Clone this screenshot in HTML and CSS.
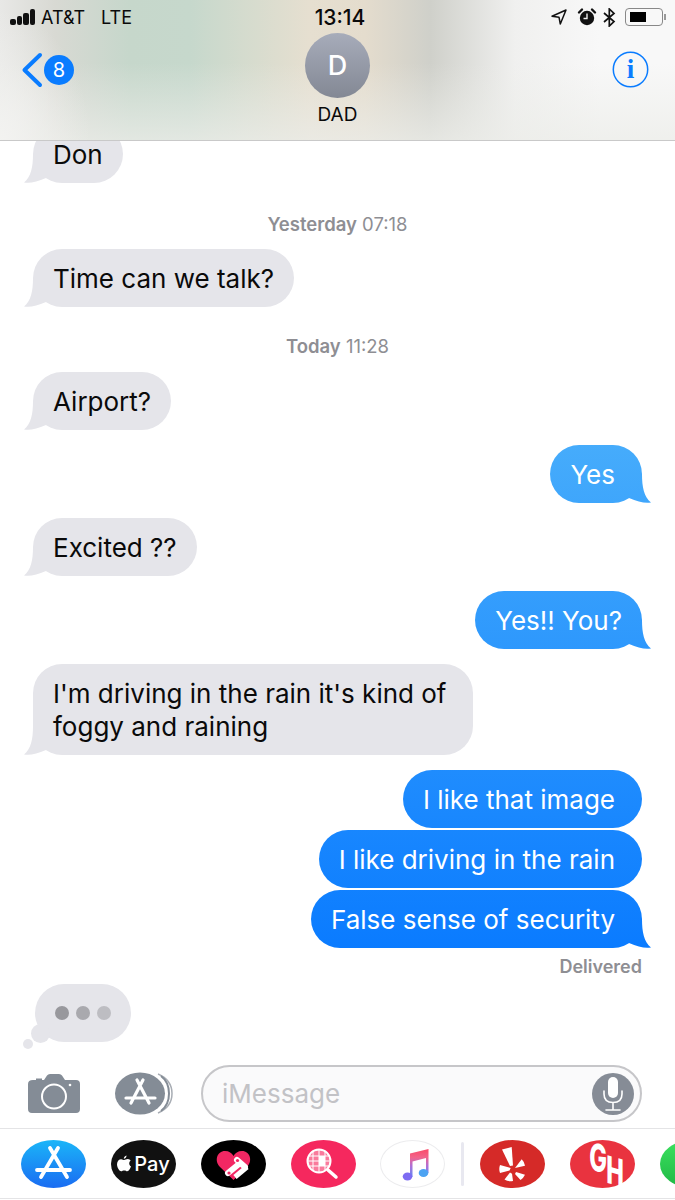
FILE: index.html
```html
<!DOCTYPE html>
<html lang="en">
<head>
    <meta charset="UTF-8">
    <meta name="viewport" content="width=device-width, initial-scale=1.0">
    <title>Messages - Dad</title>
    <link rel="stylesheet" href="styles.css">
</head>
<body>

<header class="top">
    <div class="status">
        <div class="status-left">
            <span class="signal"><i></i><i></i><i></i><i></i></span>
            <span class="carrier">AT&amp;T</span>
            <span class="network">LTE</span>
        </div>
        <div class="clock">13:14</div>
        <div class="status-right">
            <svg width="16" height="16" viewBox="0 0 16 16"><path d="M1 7.2 15 1 9.3 15 8 8.2Z" fill="none" stroke="#111" stroke-width="1.5" stroke-linejoin="round"/></svg>
            <svg class="alarm" width="20" height="20" viewBox="0 0 20 20"><circle cx="10" cy="11" r="7.2" fill="#111"/><path d="M2 5.5 5 2.5M18 5.5 15 2.5" stroke="#111" stroke-width="2.4" stroke-linecap="round"/><path d="M10 6.5V11.5H6.5" fill="none" stroke="#eee" stroke-width="1.4"/></svg>
            <svg class="bt" width="13" height="19" viewBox="0 0 13 19"><path d="M1 5 11 13.5 6.3 18V1L11 5.5 1 14" fill="none" stroke="#111" stroke-width="1.7"/></svg>
            <div class="battery"><span class="battery-level"></span></div>
            <span class="battery-tip"></span>
        </div>
    </div>
    <div class="nav">
        <div class="back">
            <svg width="22" height="36" viewBox="0 0 22 36"><path d="M19 3 3.5 18 19 33" fill="none" stroke="#0a7cff" stroke-width="4" stroke-linecap="round" stroke-linejoin="round"/></svg>
            <span class="badge">8</span>
        </div>
        <div class="contact">
            <div class="avatar">D</div>
            <div class="contact-name">DAD</div>
        </div>
        <svg class="info" width="37" height="37" viewBox="0 0 37 37">
            <circle cx="18.5" cy="18.5" r="17.2" fill="none" stroke="#0a7cff" stroke-width="1.5"/>
            <text x="18.5" y="27" text-anchor="middle" class="info-i">i</text>
        </svg>
    </div>
</header>

<main class="chat">
    <div class="bubble in first">Don</div>

    <div class="stamp stamp-a"><b>Yesterday</b> 07:18</div>
    <div class="bubble in">Time can we talk?</div>

    <div class="stamp stamp-b"><b>Today</b> 11:28</div>
    <div class="bubble in">Airport?</div>
    <div class="bubble out gap">Yes</div>
    <div class="bubble in gap">Excited ??</div>
    <div class="bubble out gap even">Yes!! You?</div>
    <div class="bubble in gap wide">I'm driving in the rain it's kind of foggy and raining</div>

    <div class="bubble out gap no-tail">I like that image</div>
    <div class="bubble out tight no-tail">I like driving in the rain</div>
    <div class="bubble out tight">False sense of security</div>
    <div class="delivered">Delivered</div>

    <div class="typing">
        <span class="dot d1"></span><span class="dot d2"></span><span class="dot d3"></span>
        <span class="puff big"></span><span class="puff small"></span>
    </div>
</main>

<section class="compose">
    <svg class="camera" width="52" height="40" viewBox="0 0 52 40">
        <path d="M5 6H8V4.500H14V6H16L19 1.500Q20 0 22 0H31Q33 0 34 1.500L37 6H48Q52 6 52 10V35Q52 39 48 39H4Q0 39 0 35V10Q0 6 5 6Z" fill="#848c96"/>
        <circle cx="26" cy="22.500" r="12" fill="none" stroke="#fff" stroke-width="2"/>
        <circle cx="42" cy="11" r="1.300" fill="#fff"/>
    </svg>
    <svg class="apps" width="58" height="43" viewBox="0 0 58 43">
        <ellipse cx="25" cy="21.500" rx="25" ry="21" fill="#848c96"/>
        <path d="M43 2Q57 8 57 21.500T43 41" fill="none" stroke="#a8adb4" stroke-width="1.500"/>
        <path d="M46 4Q54 10 54 21.500T46 39" fill="none" stroke="#848c96" stroke-width="2"/>
        <path d="M28 8 16 31M22 8 34 31M11 26H40" fill="none" stroke="#fff" stroke-width="3.200" stroke-linecap="round"/>
    </svg>
    <div class="input">
        <span class="placeholder">iMessage</span>
        <span class="mic">
            <svg width="24" height="36" viewBox="0 0 24 36"><rect x="7" y="1" width="10" height="21" rx="5" fill="#fff"/><path d="M3 15V18Q3 26.500 12 26.500T21 18V15M12 26.500V33M5 34H19" fill="none" stroke="#fff" stroke-width="1.600" stroke-linecap="round"/></svg>
        </span>
    </div>
</section>

<section class="tray">
    <div class="app app-store">
        <svg width="65" height="48" viewBox="0 0 65 48"><path d="M37 8 20 37M29 8 46 37M16 30H49" fill="none" stroke="#fff" stroke-width="3.800" stroke-linecap="round"/></svg>
    </div>
    <div class="app app-pay">
        <svg width="14" height="17" viewBox="0 0 15 18"><path d="M10.200 0.500C10.300 2.300 8.900 4 7.300 4 7.100 2.400 8.600 0.700 10.200 0.500ZM11.600 4.300C13 4.300 14 5.100 14.600 6 12.300 7.500 12.800 11 15 12 14.300 14.200 12.700 17.300 11 17.300 9.700 17.300 9.300 16.500 7.700 16.500S5.700 17.300 4.500 17.300C2.700 17.300 0 13.500 0 9.800 0 6.300 2.300 4.400 4.400 4.400 5.800 4.400 6.900 5.300 7.700 5.300S9.900 4.300 11.600 4.300Z" fill="#fff"/></svg>
        <span>Pay</span>
    </div>
    <div class="app app-heart">
        <svg width="65" height="48" viewBox="0 0 65 48">
            <path d="M32.500 40 19 27C13 21 16 11 24 11 28 11 31 13 32.500 16 34 13 37 11 41 11 49 11 52 21 46 27Z" fill="#f22763"/>
            <path d="M27 33 38 24" stroke="#fff" stroke-width="6" stroke-linecap="round"/>
            <path d="M34 37 46 27" stroke="#fff" stroke-width="5"/>
            <path d="M36 20 44 27" stroke="#fff" stroke-width="6" stroke-linecap="round"/>
            <circle cx="36.500" cy="20.500" r="1.600" fill="#f22763"/>
            <circle cx="28" cy="33" r="1.600" fill="#f22763"/>
        </svg>
    </div>
    <div class="app app-search">
        <svg width="65" height="48" viewBox="0 0 65 48">
            <circle cx="28" cy="21" r="11.500" fill="#f97a9c" stroke="#fff" stroke-width="2"/>
            <path d="M22 11V31M28 10V32M34 11V31M18 16H38M17 21H39M18 26H38" stroke="#fff" stroke-width="1"/>
            <path d="M28 16H34V26H28Z" fill="#fff"/>
            <path d="M37 30 45 37" stroke="#fff" stroke-width="3.500" stroke-linecap="round"/>
        </svg>
    </div>
    <div class="app app-music">
        <svg width="65" height="48" viewBox="0 0 65 48">
            <defs>
                <linearGradient id="note" x1="0" y1="0" x2="0" y2="1"><stop offset="0" stop-color="#fa4a68"/><stop offset=".3" stop-color="#f2648b"/><stop offset=".6" stop-color="#b06fd6"/><stop offset="1" stop-color="#5f8df5"/></linearGradient>
            </defs>
            <path d="M31 13.500 49.500 9V33H47V18L33.500 21.500V37H31Z" fill="url(#note)"/>
            <ellipse cx="28.500" cy="36.500" rx="4.800" ry="4" fill="#7d6cf2"/>
            <ellipse cx="44.500" cy="33" rx="4.800" ry="4" fill="#4da3f2"/>
        </svg>
    </div>
    <span class="sep"></span>
    <div class="app app-yelp">
        <svg width="65" height="48" viewBox="0 0 65 48" fill="#fff">
            <path d="M22 9.500 31.700 7 33 25.500 30 26Z"/>
            <path d="M20 25 30.700 28 29.500 30.500 20 33Q18.500 29 20 25Z"/>
            <path d="M24.500 39.500 30 32.500 32 33.700 33 41Q28 42 24.500 39.500Z"/>
            <path d="M36 32 45 34.700Q43.500 38 40.500 40L35 34Z"/>
            <path d="M35 28 41.700 19.300Q44.500 22 45 25.800Z"/>
        </svg>
    </div>
    <div class="app app-gh"><span class="g">G</span><span class="h">H</span></div>
    <div class="app app-green"></div>
</section>

</body>
</html>
```

FILE: styles.css
```css
* {
    box-sizing: border-box;
}
html, body {
    height: 100%;
}
body {
    margin: 0;
    overflow: hidden;
    background: #fff;
    color: #0a0a0a;
    font-family: "Inter", "Liberation Sans", sans-serif;
}

/* top bar */
.top {
    position: relative;
    z-index: 2;
    height: 141px;
    border-bottom: 1px solid #c9c9c9;
    background:
        radial-gradient(ellipse 90px 130px at 0 100%, rgba(243, 243, 241, 0.95), rgba(243, 243, 241, 0)),
        linear-gradient(to bottom, rgba(236, 237, 233, 0) 45%, rgba(236, 237, 233, 0.75) 100%),
        linear-gradient(to right, #e8e8e6 0, #d8d9d3 55px, #c6d7cb 130px, #c6d8cc 190px, #e6dfd0 310px, #e4dccd 365px, #cfd0ca 430px, #f0f0ef 515px, #f8f8f8 600px);
}
.status {
    display: grid;
    grid-template-columns: 1fr auto 1fr;
    align-items: center;
    height: 33px;
    padding-top: 1px;
    font-size: 18px;
}
.status-left {
    display: flex;
    align-items: center;
    padding-left: 10px;
}
.signal {
    display: flex;
    align-items: flex-end;
    gap: 1px;
    width: 27px;
    height: 16px;
    margin-right: 4px;
}
.signal i {
    display: block;
    width: 5.500px;
    border-radius: 2px;
    background: #111;
}
.signal i:nth-child(1) { height: 6px; }
.signal i:nth-child(2) { height: 9px; }
.signal i:nth-child(3) { height: 12px; }
.signal i:nth-child(4) { height: 16px; }
.carrier {
    margin-right: 16px;
}
.clock {
    margin-left: 5px;
    font-size: 21px;
    font-weight: 500;
}
.status-right {
    display: flex;
    align-items: center;
    justify-content: flex-end;
    padding-right: 9px;
}
.alarm {
    margin-left: 10px;
}
.bt {
    margin-left: 6px;
}
.battery {
    width: 38px;
    height: 18px;
    margin-left: 9px;
    padding: 3px 4px;
    border: 1.500px solid #888;
    border-radius: 4px;
}
.battery-level {
    display: block;
    width: 16px;
    height: 100%;
    background: #000;
}
.battery-tip {
    width: 2px;
    height: 6px;
    margin-left: 1px;
    background: #999;
}
.nav {
    display: grid;
    grid-template-columns: 1fr auto 1fr;
    padding: 0 21px;
}
.back {
    display: flex;
    align-items: center;
    height: 36px;
    margin-top: 19px;
}
.badge {
    width: 30px;
    height: 30px;
    margin-left: 1px;
    border-radius: 50%;
    background: #0a7cff;
    color: #fff;
    font-size: 20px;
    line-height: 30px;
    text-align: center;
}
.contact {
    display: flex;
    flex-direction: column;
    align-items: center;
}
.avatar {
    width: 65px;
    height: 65px;
    border-radius: 50%;
    background: linear-gradient(#a7acba, #838894);
    color: #fff;
    font-size: 27px;
    font-weight: 500;
    line-height: 65px;
    text-align: center;
}
.contact-name {
    margin-top: 5px;
    font-size: 19px;
    line-height: 24px;
}
.info {
    justify-self: end;
    margin: 18px 5px 0 0;
}
.info-i {
    fill: #0a7cff;
    font-family: "Liberation Serif", serif;
    font-size: 27px;
    font-weight: 700;
}

/* conversation */
.chat {
    display: flex;
    flex-direction: column;
    align-items: flex-start;
    height: 901px;
    padding: 0 33px;
}
.bubble {
    position: relative;
    padding: 13px 20px 12px;
    border-radius: 29px;
    font-size: 26px;
    line-height: 33px;
}
.bubble.first {
    margin-top: -16px;
}
.bubble.in {
    background: #e5e5ea;
    color: #0a0a0a;
}
.bubble.wide {
    max-width: 440px;
    padding-right: 24px;
}
.bubble.out {
    align-self: flex-end;
    padding-right: 27px;
    /* one gradient over the whole screen, so lower bubbles get deeper */
    background: linear-gradient(to bottom, #4bb0fb 400px, #0a7bff 950px) fixed;
    color: #fff;
}
.bubble.out.even {
    padding-right: 20px;
}
.bubble.in::after,
.bubble.out::after {
    content: "";
    position: absolute;
    bottom: 0;
    width: 22px;
    height: 36px;
    background: inherit;
    clip-path: path("M13 7C13 20 15 30 22 35.500 16 36.500 9 35 0 31L0 7Z");
}
.bubble.out::after {
    right: -9px;
}
.bubble.in::after {
    left: -9px;
    transform: scaleX(-1);
}
.bubble.no-tail::after {
    display: none;
}
.gap {
    margin-top: 15px;
}
.bubble.tight {
    margin-top: 2px;
}
.stamp {
    align-self: center;
    color: #8e8e93;
    font-size: 18.500px;
    line-height: 20px;
}
.stamp b {
    font-weight: 600;
}
.stamp-a {
    padding: 31px 0 15px;
}
.stamp-b {
    padding: 29px 0 16px;
}
.delivered {
    align-self: flex-end;
    padding-top: 1px;
    color: #8e8e93;
    font-size: 18px;
    font-weight: 600;
    line-height: 35px;
}
.typing {
    position: relative;
    display: flex;
    align-items: center;
    justify-content: center;
    gap: 7px;
    width: 96px;
    height: 58px;
    margin-left: 2px;
    border-radius: 29px;
    background: #e5e5ea;
}
.dot {
    width: 14px;
    height: 14px;
    border-radius: 50%;
}
.d1 { background: #98989d; }
.d2 { background: #a9a9ae; }
.d3 { background: #bdbdc2; }
.puff {
    position: absolute;
    border-radius: 50%;
    background: #e5e5ea;
}
.puff.big {
    left: -4px;
    bottom: -1px;
    width: 19px;
    height: 19px;
}
.puff.small {
    left: -12px;
    bottom: -7px;
    width: 10px;
    height: 10px;
}

/* compose bar */
.compose {
    display: flex;
    align-items: center;
    height: 57px;
    margin-top: 23px;
    padding-left: 28px;
}
.apps {
    margin-left: 35px;
}
.input {
    display: flex;
    align-items: center;
    justify-content: space-between;
    width: 441px;
    height: 57px;
    margin-left: 28px;
    padding: 0 6px 0 19px;
    border: 2px solid #c6c6c9;
    border-radius: 29px;
    background: #fafafb;
}
.placeholder {
    color: #c2c2c6;
    font-size: 26px;
}
.mic {
    display: flex;
    align-items: center;
    justify-content: center;
    width: 42px;
    height: 42px;
    border-radius: 50%;
    background: #868c96;
}

/* app tray */
.tray {
    display: flex;
    align-items: center;
    gap: 25px;
    height: 71px;
    margin-top: 6px;
    padding-left: 21px;
    overflow: hidden;
    border-top: 1px solid #e4e4e6;
    border-bottom: 1px solid #e4e4e6;
}
.app {
    display: flex;
    flex: none;
    align-items: center;
    justify-content: center;
    width: 65px;
    height: 48px;
    border-radius: 50%;
}
.app-store {
    background: linear-gradient(#1bb5f8, #1a6cf2);
}
.app-pay {
    gap: 3px;
    background: #111;
    color: #fff;
    font-size: 20px;
    font-weight: 500;
}
.app-heart {
    background: #000;
}
.app-search {
    background: #f5285e;
}
.app-music {
    margin-left: -1px;
    background: #fff;
    border: 1px solid #ececee;
}
.app-music svg {
    margin-left: -2px;
}
.sep {
    flex: none;
    width: 3px;
    height: 44px;
    margin: 0 -9px;
    border-radius: 2px;
    background: #e8e8f0;
}
.app-yelp {
    background: #d52a28;
}
.app-gh {
    background: #e9333f;
    color: #fff;
    font-family: "Inter", sans-serif;
    font-size: 38px;
    font-weight: 800;
    line-height: 1;
}
.app-gh span {
    width: 17px;
    text-align: center;
}
.app-gh .g {
    margin-bottom: 14px;
    transform: scaleX(0.62) skewY(4deg);
}
.app-gh .h {
    margin-top: 12px;
    transform: scaleX(0.62) skewY(10deg);
}
.app-green {
    background: linear-gradient(#3ce15f, #1fb845);
}
```
